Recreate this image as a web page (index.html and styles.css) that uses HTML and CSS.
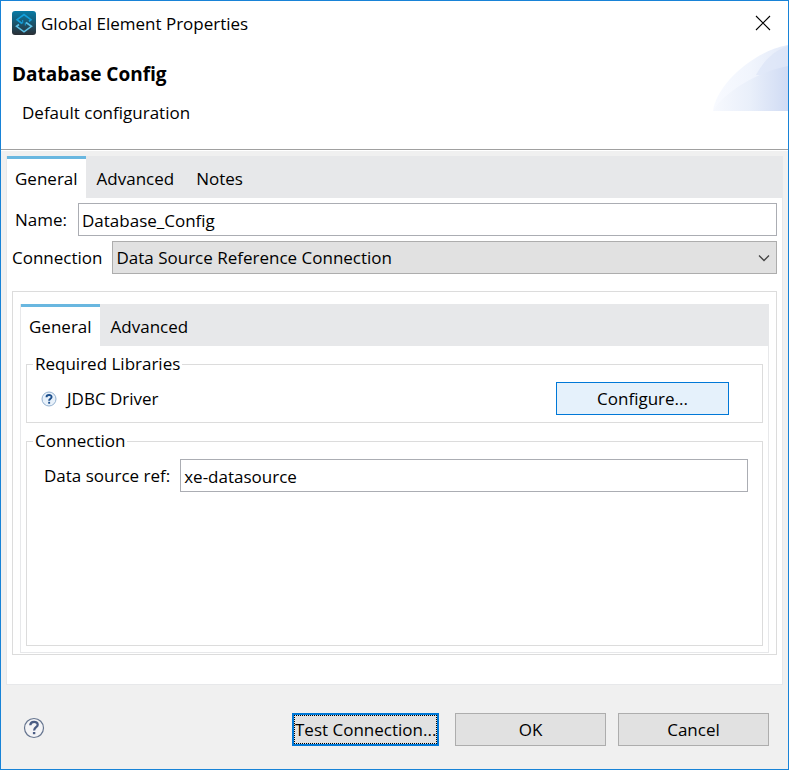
FILE: index.html
```html
<!DOCTYPE html>
<html lang="en">

<head>
  <meta charset="UTF-8">
  <meta name="viewport" content="width=device-width, initial-scale=1">
  <title>Global Element Properties</title>
  <link rel="stylesheet" href="styles.css">
</head>

<body>
  <form class="dialog">
    <header class="header">
      <div class="titlebar">
        <svg class="logo" viewBox="0 0 24 24" aria-hidden="true">
          <defs>
            <linearGradient id="logoFill" x1="0" y1="0" x2="0" y2="1">
              <stop offset="0" stop-color="#087ba6"/>
              <stop offset="1" stop-color="#2b2f35"/>
            </linearGradient>
          </defs>
          <rect width="24" height="24" rx="3" fill="url(#logoFill)"/>
          <g fill="none" stroke="#14a0dc" stroke-width="1.6">
            <path d="M10 12.500L5 8.700L12 3.500L19 8.700L17 10.300"/>
            <path d="M14 11.500L19.500 15.300L12 20.800L4.500 15.300L7 13.500" stroke="#5cc0e6"/>
            <path d="M10.700 9v3.500M13.300 11.500v3" stroke-width="1"/>
          </g>
        </svg>
        <span class="title">Global Element Properties</span>
        <button class="close" type="button" aria-label="Close">
          <svg viewBox="0 0 16 16" width="16" height="16">
            <path d="M1 1L15 15M15 1L1 15" fill="none" stroke="#000" stroke-width="1.1"/>
          </svg>
        </button>
      </div>
      <h1 class="heading">Database Config</h1>
      <p class="subtitle">Default configuration</p>
      <svg class="swoosh" viewBox="0 0 75 66" aria-hidden="true">
        <defs>
          <linearGradient id="swooshFill" x1="0" x2="1">
            <stop offset="0" stop-color="#f8faff"/>
            <stop offset="0.5" stop-color="#f1f5fd"/>
            <stop offset="1" stop-color="#e3eaf9"/>
          </linearGradient>
          <linearGradient id="swooshLow" x1="0" x2="1">
            <stop offset="0" stop-color="#f7f9fe"/>
            <stop offset="0.5" stop-color="#e9effa"/>
            <stop offset="1" stop-color="#d0dbf4"/>
          </linearGradient>
        </defs>
        <path d="M0 66C3 40 40 6 75 0V66Z" fill="url(#swooshFill)"/>
        <path d="M43 30C50 17 60 6 75 1V30Z" fill="#d6e0f6" opacity="0.5"/>
        <path d="M0 66C12 46 45 27 75 21V66Z" fill="url(#swooshLow)"/>
      </svg>
    </header>

    <main class="panel">
      <nav class="tabs">
        <button class="tab active" type="button">General</button>
        <button class="tab" type="button">Advanced</button>
        <button class="tab" type="button">Notes</button>
      </nav>

      <div class="panel-body">
        <div class="row name-row">
          <label for="name">Name:</label>
          <input class="field" id="name" type="text" value="Database_Config">
        </div>
        <div class="row">
          <label for="connection">Connection</label>
          <div class="select-wrap">
            <select class="field" id="connection">
              <option>Data Source Reference Connection</option>
            </select>
            <svg class="arrow" viewBox="0 0 12 8" aria-hidden="true">
              <path d="M1 1.500L6 6.500L11 1.500" fill="none" stroke="#444" stroke-width="1.3"/>
            </svg>
          </div>
        </div>

        <section class="outer-box">
          <div class="inner-box">
            <nav class="tabs">
              <button class="tab active" type="button">General</button>
              <button class="tab" type="button">Advanced</button>
            </nav>
            <div class="inner-body">
              <fieldset class="group">
                <legend>Required Libraries</legend>
                <div class="driver">
                  <svg class="hint" viewBox="0 0 16 16" aria-hidden="true">
                    <circle cx="8" cy="8" r="7" fill="#e8f1fa" stroke="#93b0cf"/>
                    <path d="M5.500 6.300C5.500 3.200 10.600 3.300 10.600 6C10.600 7.800 8.100 7.600 8.100 9.700" fill="none" stroke="#1d4f8c" stroke-width="1.900"/>
                    <rect x="7.200" y="10.800" width="1.900" height="1.900" fill="#1d4f8c"/>
                  </svg>
                  <span>JDBC Driver</span>
                  <button class="btn configure" type="button">Configure...</button>
                </div>
              </fieldset>
              <fieldset class="group grow">
                <legend>Connection</legend>
                <div class="source">
                  <label for="source">Data source ref:</label>
                  <input class="field" id="source" type="text" value="xe-datasource">
                </div>
              </fieldset>
            </div>
          </div>
        </section>
      </div>
    </main>

    <footer class="footer">
      <button class="help" type="button" aria-label="Help">
        <svg viewBox="0 0 22 22" width="22" height="22">
          <circle cx="11" cy="11" r="9.500" fill="#f4f4f6" stroke="#66758f" stroke-width="1.200"/>
          <path d="M7.300 8.300C7.300 3.700 14.700 3.800 14.700 7.700C14.700 10.200 11.100 10.200 11.100 13.500" fill="none" stroke="#4b5d84" stroke-width="2.300"/>
          <rect x="9.900" y="15" width="2.400" height="2.200" fill="#4b5d84"/>
        </svg>
      </button>
      <button class="btn test" type="button"><span>Test Connection...</span></button>
      <button class="btn" type="submit">OK</button>
      <button class="btn" type="button">Cancel</button>
    </footer>
  </form>
</body>

</html>
```

FILE: styles.css
```css
* {
  box-sizing: border-box;
}

body {
  margin: 0;
  font-family: "Open Sans", "Segoe UI", sans-serif;
  font-size: 17px;
  line-height: 24px;
  color: #000;
}

button, input, select {
  font: inherit;
  color: inherit;
}

.dialog {
  display: flex;
  flex-direction: column;
  min-height: 100vh;
  border: 1px solid #1883d7;
  background: #f0f0f0;
}

/* header */
.header {
  position: relative;
  padding: 9px 11px 24px;
  background: #fff;
  border-bottom: 1px solid #a0a0a0;
  box-shadow: 0 1px 0 #fff;
}

.titlebar {
  display: flex;
  align-items: center;
  gap: 5px;
}

.logo {
  width: 24px;
  height: 24px;
}

.title {
  flex: 1;
  padding-top: 2px;
}

.close {
  display: flex;
  padding: 0 6px;
  border: 0;
  background: none;
}

.heading {
  margin: 26px 0 0;
  font-size: 19px;
  line-height: 24px;
}

.subtitle {
  margin: 15px 0 0 10px;
}

.swoosh {
  position: absolute;
  right: 0;
  top: 44px;
  width: 75px;
  height: 66px;
}

/* tabs */
.tabs {
  display: flex;
  background: #e7e8ea;
}

.tab {
  height: 42px;
  padding: 3px 11px 0;
  border: 0;
  background: none;
}

.tab.active {
  padding: 0 8px;
  border-top: 3px solid #69b7e0;
  background: #fff;
}

.panel {
  flex: 1;
  display: flex;
  flex-direction: column;
  margin: 6px 5px 0;
  border: 1px solid #e7e8ea;
  border-top: 0;
  background: #fff;
}

.panel-body {
  flex: 1;
  display: flex;
  flex-direction: column;
  gap: 5px;
  padding: 5px 5px 29px;
}

.row {
  display: flex;
  align-items: center;
  gap: 10px;
}

.name-row {
  gap: 11px;
  padding-left: 3px;
}

.field {
  flex: 1;
  min-width: 0;
  height: 33px;
  padding: 1px 3px 0;
  border: 1px solid #abadb3;
  border-radius: 0;
  background: #fff;
}

.select-wrap {
  position: relative;
  flex: 1;
  display: flex;
}

.select-wrap .field {
  appearance: none;
  border-color: #adadad;
  background: #e1e1e1;
}

.arrow {
  position: absolute;
  right: 7px;
  top: 13px;
  width: 12px;
  height: 8px;
  pointer-events: none;
}

/* nested boxes */
.outer-box {
  flex: 1;
  display: flex;
  margin-top: 12px;
  padding: 12px 7px 1px;
  border: 1px solid #dcdcdc;
}

.inner-box {
  flex: 1;
  display: flex;
  flex-direction: column;
  border: 1px solid #e7e8ea;
  border-top: 0;
}

.inner-body {
  flex: 1;
  display: flex;
  flex-direction: column;
  gap: 6px;
  padding: 6px 5px;
}

.group {
  margin: 0;
  padding: 0 14px 7px;
  border: 1px solid #dcdcdc;
}

.group legend {
  margin-left: -8px;
  padding: 0 2px;
}

.grow {
  flex: 1;
}

.driver {
  display: flex;
  align-items: center;
  gap: 10px;
  padding: 6px 19px 0 0;
}

.hint {
  width: 16px;
  height: 16px;
}

.source {
  display: flex;
  align-items: center;
  gap: 10px;
  padding: 6px 0 0 3px;
}

/* buttons */
.btn {
  width: 151px;
  height: 33px;
  padding: 1px 0 0;
  border: 1px solid #adadad;
  background: #e1e1e1;
}

.configure {
  width: 173px;
  margin-left: auto;
  border-color: #0078d7;
  background: #e5f1fb;
}

.footer {
  display: flex;
  align-items: center;
  gap: 12px;
  padding: 28px 19px 23px 22px;
}

.help {
  display: flex;
  margin-right: auto;
  padding: 0 0 3px;
  border: 0;
  background: none;
}

.test {
  display: flex;
  width: 147px;
  margin-right: 4px;
  padding: 0;
  border: 2px solid #0078d7;
}

.test span {
  flex: 1;
  display: flex;
  align-items: center;
  justify-content: center;
  height: 29px;
  border: 1px dotted #000;
  white-space: nowrap;
}
```
